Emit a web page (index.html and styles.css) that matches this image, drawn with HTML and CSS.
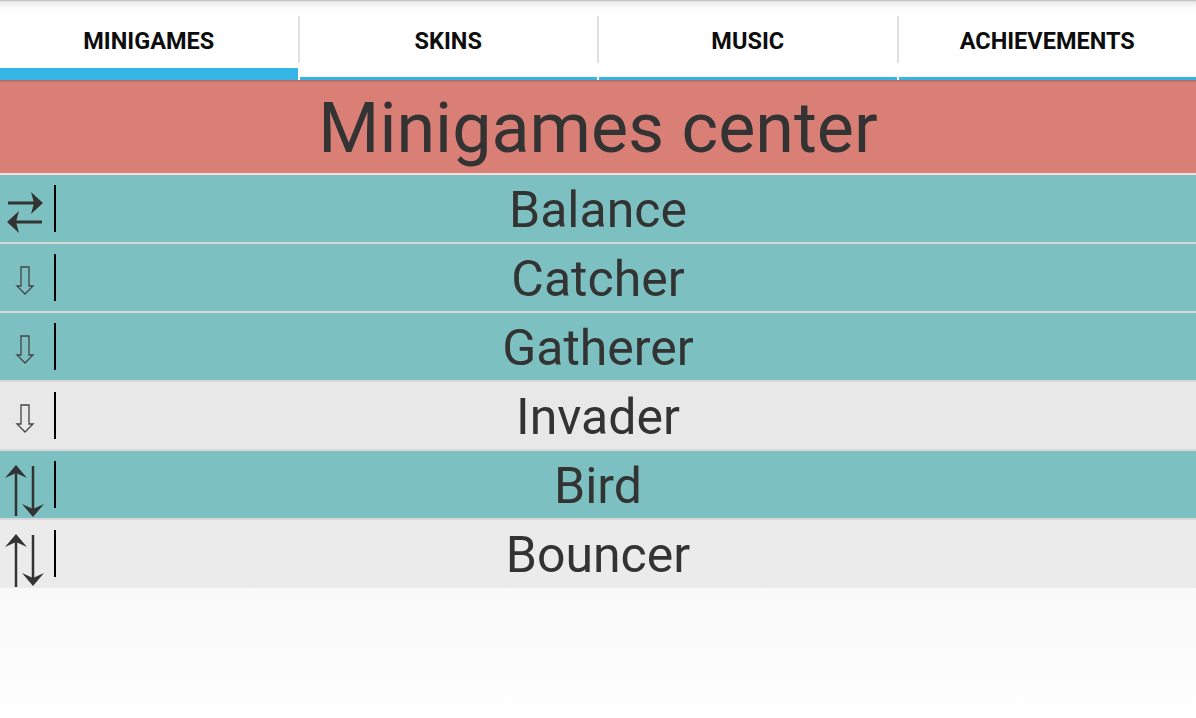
FILE: index.html
```html
<!DOCTYPE html>
<html lang="en">
<head>
<meta charset="utf-8">
<title>Minigames center</title>
<link rel="stylesheet" href="styles.css">
</head>
<body>
<nav class="tabs">
  <div class="tab active">MINIGAMES</div>
  <span class="sep"></span>
  <div class="tab">SKINS</div>
  <span class="sep"></span>
  <div class="tab">MUSIC</div>
  <span class="sep"></span>
  <div class="tab">ACHIEVEMENTS</div>
</nav>
<header class="title">Minigames center</header>
<main class="list">
  <div class="row teal">
    <div class="icon-cell">
      <svg class="icon" viewBox="0 0 54 67" width="54" height="67">
        <line x1="8" y1="28" x2="38" y2="28" stroke="#333" stroke-width="3"/>
        <path d="M43 28 L31 17 L34 28 L31 39 Z" fill="#333"/>
        <line x1="13" y1="47" x2="42" y2="47" stroke="#333" stroke-width="3"/>
        <path d="M7 47 L19 36 L16 47 L19 58 Z" fill="#333"/>
      </svg>
      <span class="bar"></span>
    </div>
    <div class="label">Balance</div>
  </div>
  <div class="row teal">
    <div class="icon-cell">
      <svg class="icon" viewBox="0 0 54 67" width="54" height="67">
        <path d="M21 23 H29 V42 H33 L25 50 L17 42 H21 Z" fill="none" stroke="#444" stroke-width="1.3" stroke-linejoin="miter"/>
      </svg>
      <span class="bar"></span>
    </div>
    <div class="label">Catcher</div>
  </div>
  <div class="row teal">
    <div class="icon-cell">
      <svg class="icon" viewBox="0 0 54 67" width="54" height="67">
        <path d="M21 23 H29 V42 H33 L25 50 L17 42 H21 Z" fill="none" stroke="#444" stroke-width="1.3" stroke-linejoin="miter"/>
      </svg>
      <span class="bar"></span>
    </div>
    <div class="label">Gatherer</div>
  </div>
  <div class="row gray">
    <div class="icon-cell">
      <svg class="icon" viewBox="0 0 54 67" width="54" height="67">
        <path d="M21 23 H29 V42 H33 L25 50 L17 42 H21 Z" fill="none" stroke="#444" stroke-width="1.3" stroke-linejoin="miter"/>
      </svg>
      <span class="bar"></span>
    </div>
    <div class="label">Invader</div>
  </div>
  <div class="row teal">
    <div class="icon-cell">
      <svg class="icon" viewBox="0 0 54 67" width="54" height="67">
        <line x1="16" y1="20" x2="16" y2="65" stroke="#333" stroke-width="2.5"/>
        <path d="M16 14 L27 27 L16 22 L5 27 Z" fill="#333"/>
        <line x1="33" y1="15" x2="33" y2="59" stroke="#333" stroke-width="2.5"/>
        <path d="M33 66 L22 53 L33 58 L44 53 Z" fill="#333"/>
      </svg>
      <span class="bar"></span>
    </div>
    <div class="label">Bird</div>
  </div>
  <div class="row light">
    <div class="icon-cell">
      <svg class="icon" viewBox="0 0 54 67" width="54" height="67">
        <line x1="16" y1="20" x2="16" y2="67" stroke="#333" stroke-width="2.5"/>
        <path d="M16 14 L27 27 L16 22 L5 27 Z" fill="#333"/>
        <line x1="33" y1="15" x2="33" y2="59" stroke="#333" stroke-width="2.5"/>
        <path d="M33 66 L22 53 L33 58 L44 53 Z" fill="#333"/>
      </svg>
      <span class="bar"></span>
    </div>
    <div class="label">Bouncer</div>
  </div>
</main>
</body>
</html>
```

FILE: styles.css
```css
html, body {
  margin: 0;
  padding: 0;
}

body {
  width: 1196px;
  min-height: 718px;
  font-family: Roboto, "Noto Sans", "Liberation Sans", sans-serif;
  background: linear-gradient(#f9f9f9 587px, #fefefe 718px);
  overflow: hidden;
}

.tabs {
  display: flex;
  height: 80px;
  background: linear-gradient(#b9b9b9 0px, #ececec 2px, #fbfbfb 8px, #ffffff 16px);
}

.tab {
  flex: 1;
  box-sizing: border-box;
  height: 80px;
  padding-top: 28px;
  text-align: center;
  font-size: 23.5px;
  line-height: 27px;
  font-weight: 700;
  color: #0d0d0d;
  border-bottom: 3px solid #33b5e5;
}

.tab.active {
  border-bottom-width: 12px;
}

.sep {
  width: 2px;
  height: 47px;
  margin-top: 16px;
  background: #e0e0e0;
}

.title {
  box-sizing: border-box;
  height: 95px;
  padding-top: 4px;
  background: linear-gradient(rgba(0, 0, 0, 0.18), rgba(0, 0, 0, 0) 3px), #d97f76;
  border-bottom: 2px solid #efe0de;
  text-align: center;
  font-size: 70px;
  line-height: 89px;
  color: #333333;
}

.row {
  display: grid;
  grid-template-columns: 56px 1fr 56px;
  height: 67px;
  border-bottom: 2px solid #d8d8d8;
}

.row:last-child {
  border-bottom: none;
  height: 68px;
}

.row.teal {
  background: #7cc0c1;
}

.row.gray {
  background: #e8e8e8;
}

.row.light {
  background: #ebebeb;
}

.icon-cell {
  display: flex;
  align-items: flex-start;
}

.icon {
  display: block;
  width: 54px;
  height: 67px;
  overflow: visible;
}

.bar {
  width: 2px;
  height: 47px;
  margin-top: 10px;
  background: #000;
}

.label {
  padding-top: 3px;
  text-align: center;
  font-size: 50px;
  line-height: 64px;
  color: #333333;
}
```
